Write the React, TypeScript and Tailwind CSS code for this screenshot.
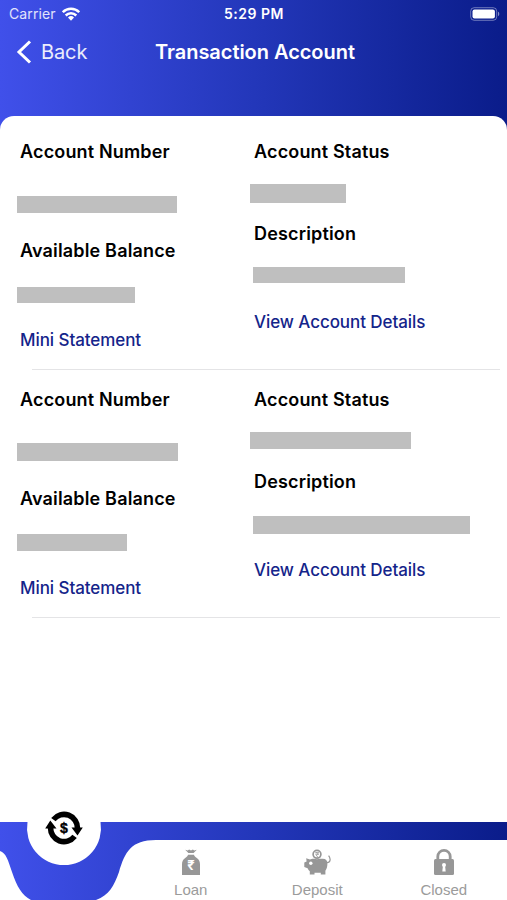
import type { ReactNode } from 'react'

type Account = {
  numberBar: string
  balanceBar: string
  statusBar: string
  descriptionBar: string
}

const accounts: Account[] = [
  {
    numberBar: 'mt-[31px] -ml-[3px] h-[17px] w-40',
    balanceBar: 'mt-[23px] -ml-[3px] h-4 w-[118px]',
    statusBar: 'mt-[19px] -ml-1 h-[19px] w-24',
    descriptionBar: 'mt-5 -ml-px h-4 w-[152px]',
  },
  {
    numberBar: 'mt-[30px] -ml-[3px] h-[18px] w-[161px]',
    balanceBar: 'mt-[22px] -ml-[3px] h-[17px] w-[110px]',
    statusBar: 'mt-[19px] -ml-1 h-[17px] w-[161px]',
    descriptionBar: 'mt-[21px] -ml-px h-[18px] w-[217px]',
  },
]

function Field({ label, bar, slot }: { label: string; bar: string; slot: string }) {
  return (
    <div>
      <div className="text-[18px] font-semibold leading-[26px] tracking-[0.16px] text-black">{label}</div>
      <div className={`flex ${slot}`}>
        <div className={`bg-[#bfbfbf] ${bar}`} />
      </div>
    </div>
  )
}

function DetailLink({ children }: { children: ReactNode }) {
  return (
    <a className="block text-[17px] font-medium leading-6 tracking-[-0.07px] text-[#14248a]">{children}</a>
  )
}

function AccountRow({ account }: { account: Account }) {
  return (
    <div className="flex h-[248px] flex-col">
      <div className="flex flex-1 pl-5 pt-[17px]">
        <div className="w-[234px]">
          <Field label="Account Number" bar={account.numberBar} slot="h-[73px]" />
          <Field label="Available Balance" bar={account.balanceBar} slot="h-16" />
          <DetailLink>Mini Statement</DetailLink>
        </div>
        <div className="flex-1">
          <Field label="Account Status" bar={account.statusBar} slot="h-14" />
          <Field label="Description" bar={account.descriptionBar} slot="h-[63px]" />
          <DetailLink>View Account Details</DetailLink>
        </div>
      </div>
      <div className="ml-8 mr-[7px] h-px bg-[#e4e4e6]" />
    </div>
  )
}

function Tab({ label, children }: { label: string; children: ReactNode }) {
  return (
    <div className="flex w-[126.5px] flex-col items-center pt-[26px]">
      {children}
      <span
        className="mt-[5px] text-[15px] leading-[18px] text-[#9b9b9b]"
        style={{ fontFamily: '"Liberation Sans", Arial, sans-serif' }}
      >
        {label}
      </span>
    </div>
  )
}

function TransferIcon() {
  return (
    <svg width="38" height="34" viewBox="0 0 38 34" className="absolute left-[45px] -top-[11px]">
      <g fill="none" stroke="#000" strokeWidth="5.6">
        <path d="M8.4 8.6A13.4 13.4 0 0 1 32.4 17.5" />
        <path d="M29.6 25.4A13.4 13.4 0 0 1 5.6 16.5" />
      </g>
      <path d="M26.5 16.5h11.3l-5.3 8zM.2 17.5h11.3l-6.2-8z" />
      <text
        x="19"
        y="21.8"
        textAnchor="middle"
        fontSize="14"
        fontWeight="700"
        stroke="#000"
        strokeWidth=".4"
        style={{ fontFamily: '"Liberation Sans", Arial, sans-serif' }}
      >
        $
      </text>
    </svg>
  )
}

function LoanIcon() {
  return (
    <svg width="20" height="28" viewBox="0 0 20 28" fill="#979797">
      <path d="m4.2 1.8 2.6.7 1.3-.9 1.9.8 1.9-.8 1.3.9 2.6-.7L12.6 5H7.400z" />
      <path d="M7 6.800h6c.3 1.400 1.400 2.200 2.800 3.200 2.300 1.600 3.200 3.700 3.200 6.500V27H1V16.500C1 13.700 1.900 11.600 4.200 10 5.600 9 6.700 8.200 7 6.800z" />
      <text x="10" y="21.8" textAnchor="middle" fontSize="13" fontWeight="700" fill="#fff">₹</text>
    </svg>
  )
}

function DepositIcon() {
  return (
    <svg width="28" height="28" viewBox="0 0 28 28" fill="#979797">
      <path d="M3.200 10.200 7 11.500c1-.5 2-.7 3.500-.7h9.300c3 0 4.600 1.900 4.600 4.700 0 3.200-.7 5.500-2 7.300v3.700h-4.600V24.800h-6.300v1.700H6.800v-3.300c-1-.8-1.700-1.800-2.200-3L1.300 19v-4.600l2.300-.9z" />
      <circle cx="14" cy="6.300" r="5" fill="#fff" />
      <circle cx="14" cy="6.300" r="3.900" fill="none" stroke="#979797" strokeWidth="1.700" />
      <path d="M12.200 4.600h3.800M12.200 6.200h3.800M13 4.600c2.500 0 2.500 2.700 0 2.700l2 1.800" fill="none" stroke="#979797" strokeWidth=".8" />
      <circle cx="7.800" cy="15.300" r="1.700" fill="#fff" />
      <path d="M23.800 14.600c3.800.2 4.200-4 1.800-7" fill="none" stroke="#979797" strokeWidth="1.200" />
    </svg>
  )
}

function LockIcon() {
  return (
    <svg width="22" height="28" viewBox="0 0 22 28">
      <path d="M4.800 12V8.500a6.200 6.200 0 0 1 12.400 0V12" fill="none" stroke="#979797" strokeWidth="2.800" />
      <rect x="1" y="11" width="20" height="16" rx="1.500" fill="#979797" />
      <circle cx="11" cy="17" r="2" fill="#fff" />
      <path d="M10 17h2l.7 6.500H9.300z" fill="#fff" />
    </svg>
  )
}

export default function App() {
  return (
    <div
      className="flex h-[900px] w-[507px] flex-col overflow-hidden bg-linear-to-r from-[#4050ea] via-[#2337ba] to-[#0a1c8a] text-white"
      style={{ fontFamily: 'Inter, sans-serif' }}
    >
      <div className="grid h-[27px] grid-cols-3 items-center pl-[9px] pr-[7px]">
        <div className="flex items-center gap-[6px] text-[14px] tracking-[0.1px] text-white/85">
          Carrier
          <svg width="18" height="14" viewBox="0 0 18 14" fill="none" stroke="#fff" strokeWidth="2.500">
            <path d="M.8 5.200a11.700 11.700 0 0 1 16.400 0" />
            <path d="M3.700 8.500a7.600 7.600 0 0 1 10.600 0" />
            <path d="m9 13.700-3-3.200a4.300 4.300 0 0 1 6 0z" fill="#fff" stroke="none" />
          </svg>
        </div>
        <div className="-ml-px text-center text-[14px] font-semibold tracking-[0.5px]">5:29 PM</div>
        <svg width="30" height="14" viewBox="0 0 30 14" className="justify-self-end">
          <rect x=".7" y=".7" width="26" height="12.600" rx="3.500" fill="none" stroke="#fff" strokeOpacity=".4" />
          <rect x="2.500" y="2.500" width="22.400" height="9" rx="2" fill="#fff" />
          <path d="M28 4.800c1.700.6 1.700 3.800 0 4.400z" fill="#fff" fillOpacity=".5" />
        </svg>
      </div>

      <div className="flex h-[50px] items-center pl-4">
        <svg width="16" height="24" viewBox="0 0 16 24" fill="none" stroke="#fff" strokeWidth="3">
          <path d="M14 1.500 3 12l11 10.500" />
        </svg>
        <span className="ml-[9px] w-[114px] text-[20px] tracking-[-0.1px] text-white/90">Back</span>
        <h1 className="text-[20px] font-semibold tracking-[-0.04px]">Transaction Account</h1>
      </div>

      <div className="mt-[39px] flex-1 rounded-t-[14px] bg-white pt-[6px]">
        {accounts.map((account, i) => (
          <AccountRow key={i} account={account} />
        ))}
      </div>

      <div className="relative flex h-[78px] justify-end">
        {/* White tray, with the notch for the selected tab */}
        <svg width="507" height="78" viewBox="0 0 507 78" fill="#fff" className="absolute inset-0">
          <path d="M27.500 0a37 37 0 1 0 73 0z" />
          <path d="M0 29c6 2 8 9 12 21 5 15 10 23 19 28H0z" />
          <path d="M96 78c13-5 18-14 23-28 6-20 12-32 37-32h351v60z" />
        </svg>
        <TransferIcon />
        <div className="relative flex">
          <Tab label="Loan"><LoanIcon /></Tab>
          <Tab label="Deposit"><DepositIcon /></Tab>
          <Tab label="Closed"><LockIcon /></Tab>
        </div>
      </div>
    </div>
  )
}
